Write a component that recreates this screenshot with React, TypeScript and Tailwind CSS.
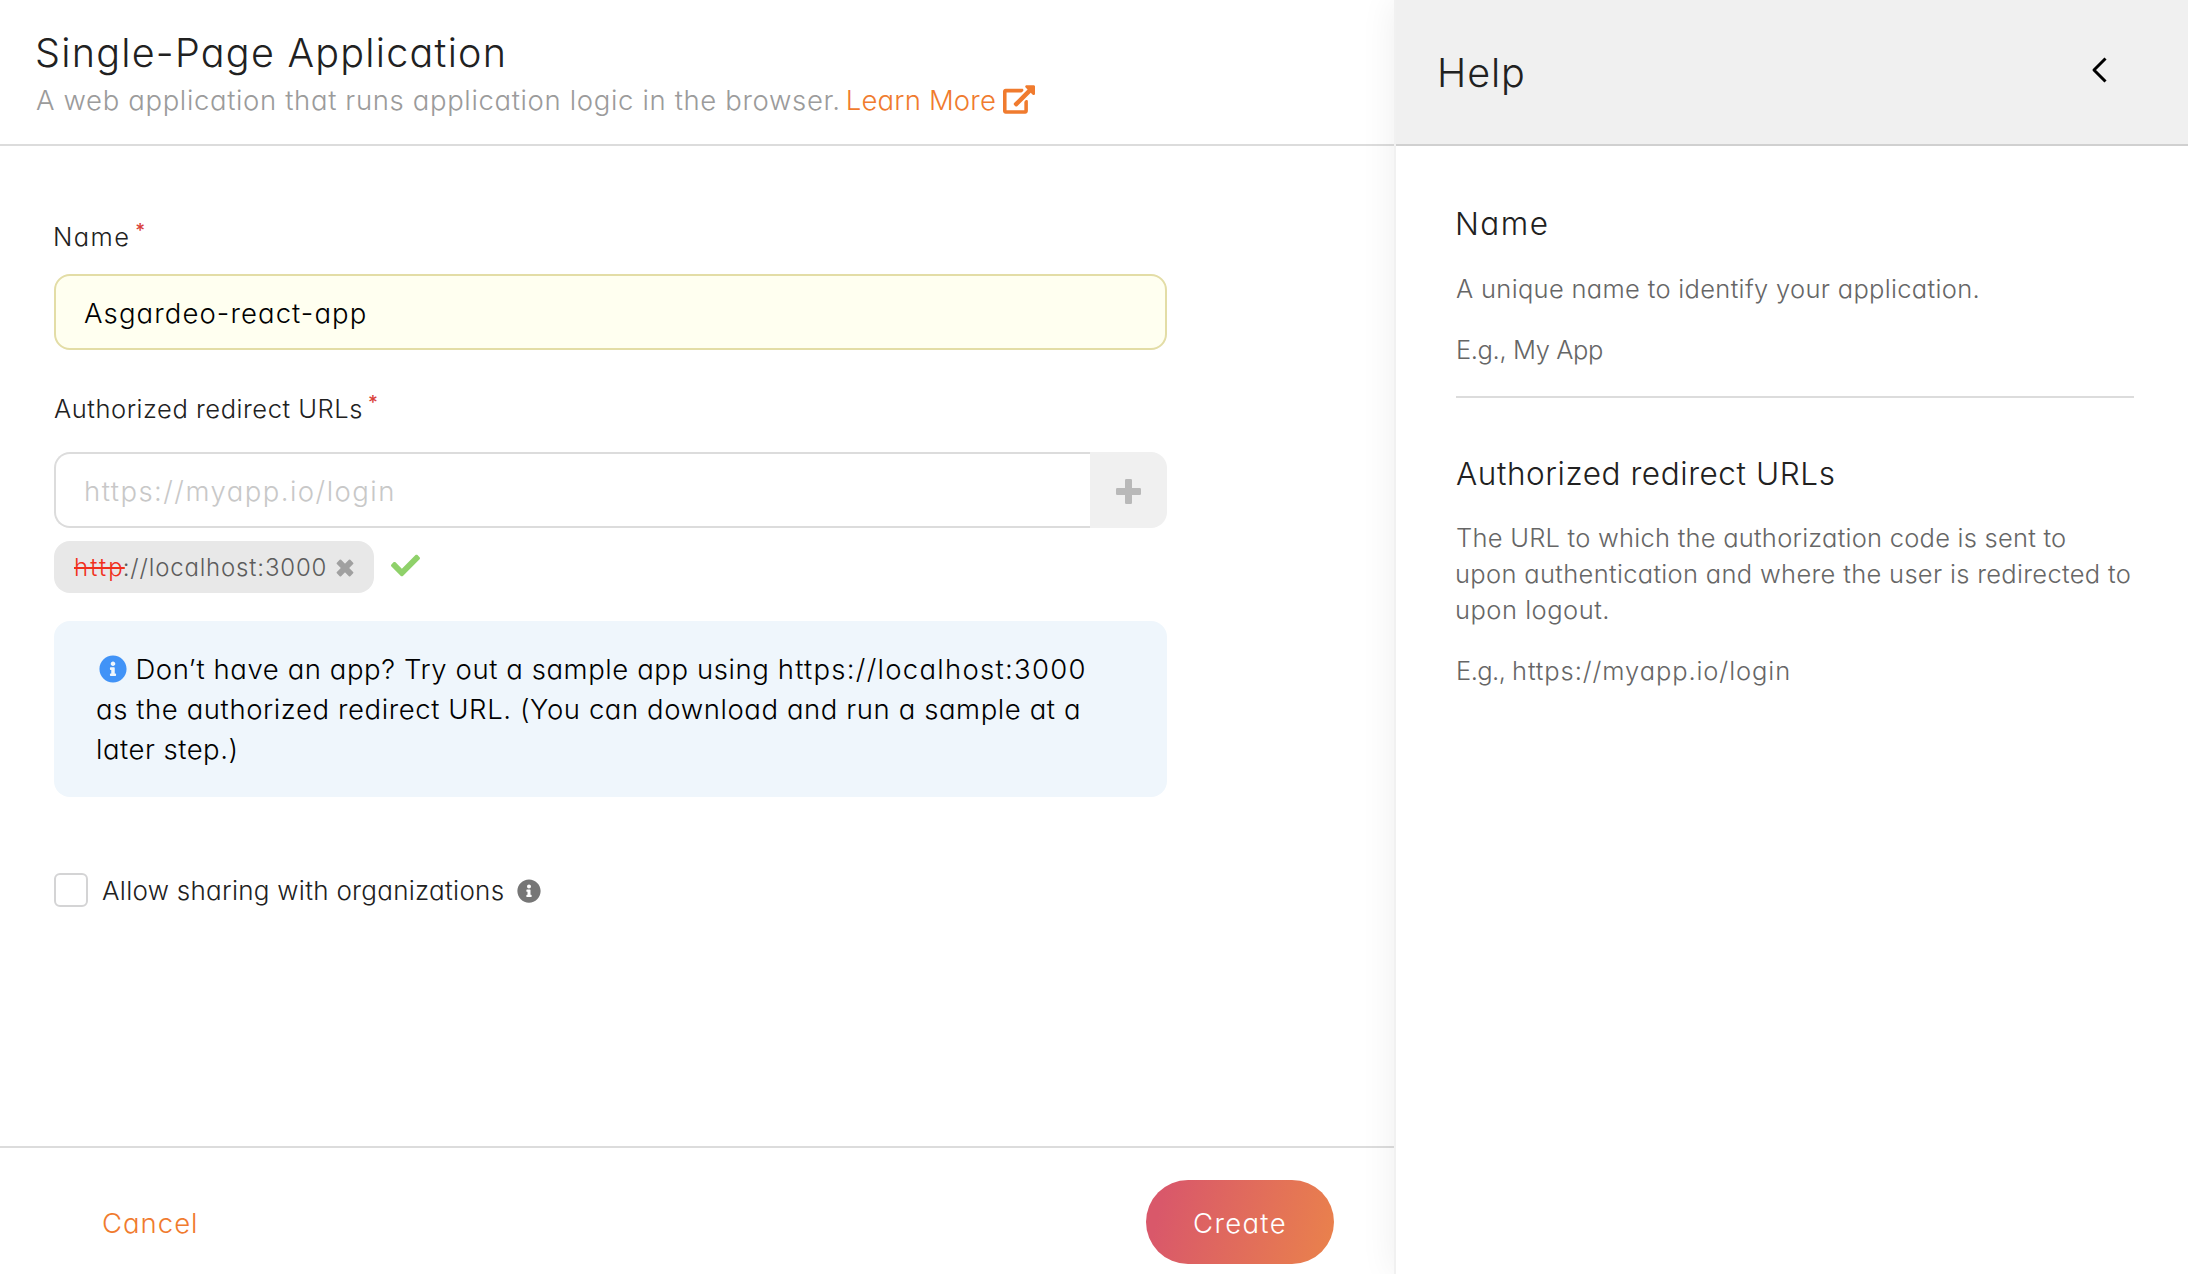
import type { ReactNode } from "react";
import { FaCheck, FaInfoCircle } from "react-icons/fa";

function ExternalLinkIcon() {
  return (
    <svg viewBox="0 0 576 512" className="h-[29px] w-[32px]" fill="currentColor">
      <path d="M576 24v127.984c0 21.461-25.96 31.98-40.971 16.971l-35.707-35.709-243.523 243.523c-9.373 9.373-24.568 9.373-33.941 0l-22.627-22.627c-9.373-9.373-9.373-24.569 0-33.941L442.756 76.676l-35.703-35.705C391.982 25.9 402.656 0 424.024 0H552c13.255 0 24 10.745 24 24zM407.029 270.794l-16 16A23.999 23.999 0 0 0 384 303.765V448H64V128h264a24.003 24.003 0 0 0 16.97-7.029l16-16C376.089 89.851 365.381 64 344 64H48C21.49 64 0 85.49 0 112v352c0 26.51 21.49 48 48 48h352c26.51 0 48-21.49 48-48V287.764c0-21.382-25.852-32.09-40.971-16.97z" />
    </svg>
  );
}

function PlusIcon() {
  return (
    <svg viewBox="0 0 25 25" className="size-[25px]" fill="#b9b9b9">
      <rect x="0" y="9" width="25" height="7" rx="1.2" />
      <rect x="9" y="0" width="7" height="25" rx="1.2" />
    </svg>
  );
}

function CrossIcon() {
  return (
    <svg viewBox="0 0 18 18" className="size-[18px]" fill="#a0a0a0">
      <rect x="-0.5" y="6" width="19" height="6" rx="1" transform="rotate(45 9 9)" />
      <rect x="-0.5" y="6" width="19" height="6" rx="1" transform="rotate(-45 9 9)" />
    </svg>
  );
}

function Label({ children }: { children: ReactNode }) {
  return (
    <label className="flex h-8 text-[25.5px] leading-8 text-[#212121]">
      {children}
      <span className="ml-[5px] pt-[2px] text-[19px] leading-[15px] font-medium text-[#d9413b]">*</span>
    </label>
  );
}

function MainPanel() {
  return (
    <main className="flex w-[1394px] shrink-0 flex-col">
      <header className="h-[146px] border-b-2 border-[#dcdcdc] pt-[31px] pl-[35px]">
        <h1 className="text-[39.5px] leading-[44px] tracking-[1.25px] text-[#212121]">Single-Page Application</h1>
        <div className="mt-[6px] ml-[1px] flex h-9 items-center text-[27.5px] leading-9 text-[#9b9b9b]">
          <span className="pt-px tracking-[0.643px]">A web application that runs application logic in the browser.</span>
          <a className="ml-[5px] flex items-center tracking-[0.18px] text-[#f07b2e]">
            <span className="pt-px">Learn More</span>
            <span className="ml-[7px]">
              <ExternalLinkIcon />
            </span>
          </a>
        </div>
      </header>

      <form className="flex grow flex-col pt-[75px] pl-[54px]">
        <Label>
          <span className="-ml-px tracking-[1.4px]">Name</span>
        </Label>
        <div className="mt-[21px] flex h-[76px] w-[1113px] items-center rounded-[16px] border-2 border-[#e3dda6] bg-[#fffff0] pt-[3px] pl-[28px] text-[27.5px] tracking-[1.1px] text-black">
          Asgardeo-react-app
        </div>

        <div className="mt-[43px]">
          <Label>
            <span className="tracking-[0.543px]">Authorized redirect URLs</span>
          </Label>
        </div>
        <div className="mt-[27px] flex h-[76px] w-[1113px]">
          <div className="flex w-[1036px] items-center rounded-l-[16px] border-2 border-r-0 border-[#dcdcdc] pt-[3px] pl-[28px] text-[27.5px] tracking-[1.47px] text-[#c8c8c8]">
            https://myapp.io/login
          </div>
          <div className="flex grow items-center justify-center rounded-r-[16px] bg-[#f0f0f0] pt-[2px]">
            <PlusIcon />
          </div>
        </div>

        <div className="mt-[13px] flex h-[52px] items-center">
          <div className="flex h-[52px] w-[320px] items-center rounded-[16px] bg-[#e8e8e8] pl-[20px] text-[24px] text-[#5c5c5c]">
            <span className="pt-[2px] tracking-[2.1px] text-[#f0301c] line-through decoration-2">http</span>
            <span className="-ml-[2px] pt-[2px] tracking-[0.82px]">://localhost:3000</span>
            <span className="ml-[9px] pt-px">
              <CrossIcon />
            </span>
          </div>
          <FaCheck className="mb-[3px] ml-[17px] size-[29px] text-[#8fd16a]" />
        </div>

        <div className="mt-[28px] h-[176px] w-[1113px] rounded-[16px] bg-[#eff6fc] pt-[28px] pl-[42px] text-[27.5px] leading-10 whitespace-nowrap text-black">
          <div className="flex h-10 items-center">
            <FaInfoCircle className="ml-[2.5px] size-[28px] text-[#4193f7]" />
            <span className="ml-[9px] tracking-[0.58px]">
              Don’t have an app? Try out a sample app using{" "}
              <span className="tracking-[1.28px]">https://localhost:3000</span>
            </span>
          </div>
          <div className="tracking-[0.59px]">as the authorized redirect URL. (You can download and run a sample at a</div>
          <div className="tracking-[0.5px]">later step.)</div>
        </div>

        <div className="mt-[76px] flex h-[34px] items-center">
          <span className="size-[34px] rounded-[6px] border-2 border-[#d4d4d5] bg-white" />
          <span className="ml-[14px] pt-px text-[26px] tracking-[0.28px] text-[#212121]">
            Allow sharing with organizations
          </span>
          <FaInfoCircle className="mt-[2px] ml-[13px] size-[24px] text-[#767676]" />
        </div>
      </form>

      <footer className="flex h-[128px] items-center justify-between border-t-2 border-[#dcdcdc] pt-[22px] pr-[60px] pl-[102px] text-[27.5px]">
        <button className="pt-[4px] tracking-[1px] text-[#f07b2e]">Cancel</button>
        <button className="h-[84px] w-[188px] rounded-full bg-[linear-gradient(105deg,#d9586a_10%,#e9804d_95%)] pt-[4px] tracking-[1.35px] text-white">
          Create
        </button>
      </footer>
    </main>
  );
}

function HelpPanel() {
  return (
    <aside className="relative z-10 grow border-l-2 border-[#f1f1f1] bg-white shadow-[0_0_34px_rgba(0,0,0,0.07)]">
      <header className="flex h-[146px] items-center justify-between border-b-2 border-[#d0d0d0] bg-[#f0f0f0] pr-[81px] pl-[41px]">
        <h2 className="pt-px text-[39.5px] leading-[44px] tracking-[0.9px] text-[#212121]">Help</h2>
        <svg viewBox="0 0 16 26" className="mb-[4px] h-[26px] w-[16px]" fill="none" stroke="#000" strokeWidth="3" strokeLinejoin="round">
          <path d="M14.5 1.5 3 13 14.5 24.5" />
        </svg>
      </header>
      <div className="pt-[58px] pl-[60px] text-[25.5px] leading-9 whitespace-nowrap text-[#666]">
        <h3 className="-ml-px text-[31.5px] leading-10 tracking-[1.45px] text-[#212121]">Name</h3>
        <p className="mt-[27px] tracking-[0.32px]">A unique name to identify your application.</p>
        <p className="mt-[25px] tracking-[-0.38px]">E.g., My App</p>
        <hr className="mt-[28px] w-[678px] border-t-2 border-[#dcdcdc]" />
        <h3 className="mt-[56px] text-[31.5px] leading-10 tracking-[0.58px] text-[#212121]">Authorized redirect URLs</h3>
        <div className="mt-[26px]">
          <p className="tracking-[0.24px]">The URL to which the authorization code is sent to</p>
          <p className="-ml-px tracking-[0.32px]">upon authentication and where the user is redirected to</p>
          <p className="-ml-px tracking-[0.5px]">upon logout.</p>
        </div>
        <p className="mt-[25px] tracking-[-0.55px]">
          E.g., <span className="tracking-[0.9px]">https://myapp.io/login</span>
        </p>
      </div>
    </aside>
  );
}

export default function App() {
  return (
    <div className="flex h-[1274px] w-[2188px] overflow-hidden bg-white font-['Inter',sans-serif] font-light [font-feature-settings:'cv11']">
      <MainPanel />
      <HelpPanel />
    </div>
  );
}
